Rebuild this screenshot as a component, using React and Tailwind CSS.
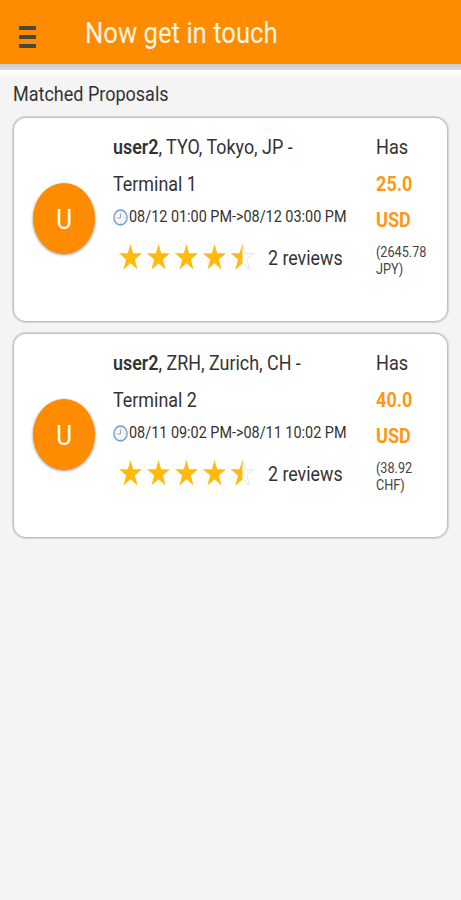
import React from 'react';

const proposals = [
  {
    id: 1,
    user: 'user2',
    location: ', TYO, Tokyo, JP -',
    terminal: 'Terminal 1',
    time: '08/12 01:00 PM->08/12 03:00 PM',
    amount: '25.0',
    currency: 'USD',
    converted: '(2645.78',
    convertedCurrency: 'JPY)',
  },
  {
    id: 2,
    user: 'user2',
    location: ', ZRH, Zurich, CH -',
    terminal: 'Terminal 2',
    time: '08/11 09:02 PM->08/11 10:02 PM',
    amount: '40.0',
    currency: 'USD',
    converted: '(38.92',
    convertedCurrency: 'CHF)',
  },
];

const STAR = 'M12.5 0 L15.4 9 H25 L17.2 14.8 L20.2 24.5 L12.5 18.6 L4.8 24.5 L7.8 14.8 L0 9 H9.6 Z';
const HALF_STAR = 'M12.5 0 V18.6 L4.8 24.5 L7.8 14.8 L0 9 H9.6 Z';

const Star = ({ half }) => (
  <svg className="w-[23px] h-[26px]" viewBox="0 0 25 25" preserveAspectRatio="none">
    {half && <path d={STAR} fill="#fdfdfd" stroke="#dcdcdc" strokeWidth="0.8" />}
    <path d={half ? HALF_STAR : STAR} fill="#ffb90f" />
  </svg>
);

const Clock = () => (
  <svg className="w-[15px] h-[17px] shrink-0" viewBox="0 0 15 17">
    <ellipse cx="7.5" cy="8.5" rx="6.6" ry="7.5" fill="#f4f7fc" stroke="#6b9bdc" strokeWidth="1.3" />
    <path d="M7.6 4.5 V9 H4.6" fill="none" stroke="#b89a9a" strokeWidth="1" />
    <path d="M7.5 2.5 v1 M7.5 13.5 v1 M2.5 8.5 h1 M11.5 8.5 h1" stroke="#b8bcc6" strokeWidth="0.8" />
  </svg>
);

const ProposalCard = ({ proposal }) => (
  <div className="flex h-[205px] rounded-[13px] border border-[#c0c0c0] shadow-[0_0_1px_1px_#d4d4d4] bg-white text-[#333333]">
    <div className="w-[98.5px] pl-[19px] pt-[65px] shrink-0">
      <div className="w-[62px] h-[71px] rounded-[50%] bg-[#ff8c00] shadow-[0_1px_3px_rgba(0,0,0,0.45)] flex items-center justify-center">
        <span className="text-white text-[28px] leading-none scale-x-87 pt-[3px]">U</span>
      </div>
    </div>

    <div className="w-[263.5px] pt-[10.5px] shrink-0 whitespace-nowrap">
      <p className="text-[20px] leading-[37px] origin-left scale-x-[0.895]">
        <b className="font-semibold">{proposal.user}</b>{proposal.location}
      </p>
      <p className="text-[20px] leading-9 origin-left scale-x-[0.895]">{proposal.terminal}</p>
      <div className="flex items-center h-[31px]">
        <Clock />
        <span className="text-[16px] origin-left scale-x-90 ml-px">{proposal.time}</span>
      </div>
      <div className="flex items-center pl-[6.5px] h-[50px]">
        <div className="flex gap-[5px] pb-px">
          <Star />
          <Star />
          <Star />
          <Star />
          <Star half />
        </div>
        <span className="text-[20px] ml-[14px] origin-left scale-x-[0.89]">2 reviews</span>
      </div>
    </div>

    <div className="flex-1 pt-[10.5px]">
      <div className="origin-left scale-x-[0.905] whitespace-nowrap">
        <p className="text-[20px] leading-[37px]">Has</p>
        <p className="text-[20px] leading-9 font-bold text-[#ff9914]">{proposal.amount}</p>
        <p className="text-[20px] leading-9 font-bold text-[#ff9914]">{proposal.currency}</p>
        <p className="text-[14px] leading-[17px] pt-[6px] text-[#444444]">
          {proposal.converted}<br />{proposal.convertedCurrency}
        </p>
      </div>
    </div>
  </div>
);

const App = () => {
  return (
    <div className="min-h-screen bg-[#f4f4f4] font-[Roboto,sans-serif]">
      <header className="h-[64px] bg-[#ff8c00] flex items-center">
        <button type="button" className="ml-[19px] mt-[9px] w-[17px] flex flex-col gap-[5px]">
          <span className="block h-[4px] w-full bg-[#47483c]"></span>
          <span className="block h-[4px] w-full bg-[#47483c]"></span>
          <span className="block h-[4px] w-full bg-[#47483c]"></span>
        </button>
        <h1 className="ml-[48.5px] mt-[3px] text-[29px] text-[#fff5e6] whitespace-nowrap origin-left scale-x-[0.885]">Now get in touch</h1>
      </header>
      <div className="h-[6px] bg-linear-to-b from-[#c6cbd0] to-[#dcdcdc]"></div>
      <div className="h-[10px] bg-linear-to-b from-white to-[#f4f4f4]"></div>

      <main className="px-[13px]">
        <h2 className="h-[37px] text-[20px] leading-7 text-[#333333] origin-left scale-x-90">Matched Proposals</h2>
        <div className="flex flex-col gap-[11px]">
          {proposals.map(proposal => (
            <ProposalCard key={proposal.id} proposal={proposal} />
          ))}
        </div>
      </main>
    </div>
  );
};

export default App;
